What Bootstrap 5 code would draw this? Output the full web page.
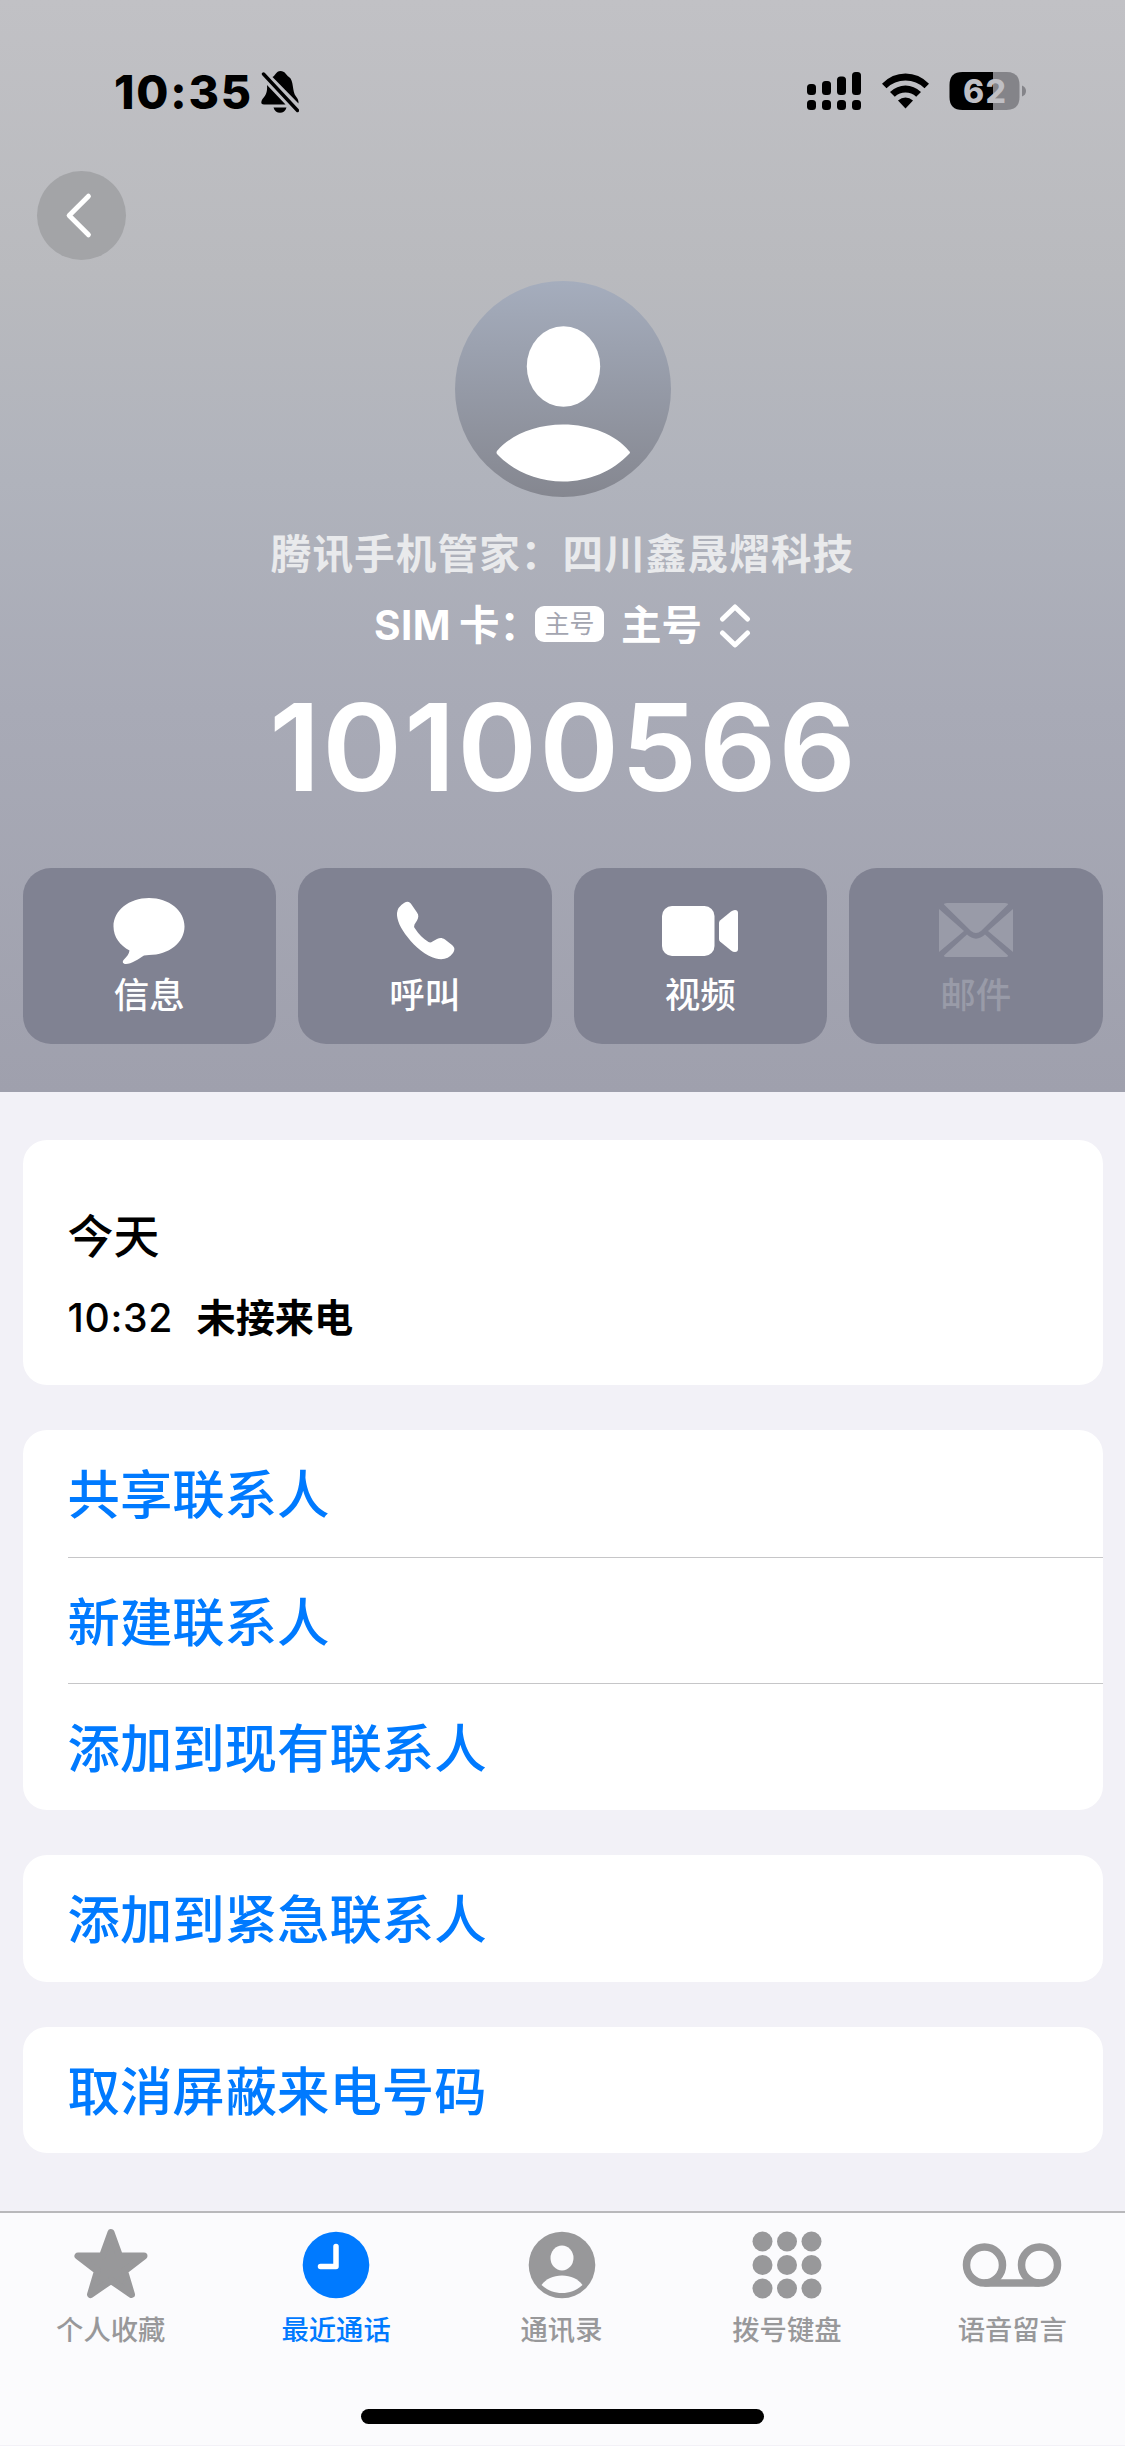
<!DOCTYPE html>
<html lang="zh-CN">
<head>
<meta charset="utf-8">
<meta name="viewport" content="width=device-width, initial-scale=1">
<title>10100566</title>
<link href="https://cdn.jsdelivr.net/npm/bootstrap@5.3.0/dist/css/bootstrap.min.css" rel="stylesheet">
<style>
body{width:1125px;height:2446px;overflow:hidden;background:#f2f1f7;font-family:Inter,"Noto Sans CJK SC",sans-serif;color:#000;line-height:1}
svg{display:block;flex:none}
.hero{height:1092px;background:linear-gradient(#c1c1c5 0,#b9babe 25%,#b0b3bc 44%,#a8aab6 65%,#9fa0ad 100%)}
.statusbar{height:171px;padding:71px 99px 0 114px}
.clock-text{font-size:46.5px;font-weight:800;line-height:42px;letter-spacing:1.8px;width:147px;white-space:nowrap}
.wifi{margin-left:21px}
.battery{margin-left:20px}
.back-btn{width:89px;height:89px;margin-left:36.5px;background:#a3a4a7}
.avatar-svg{margin-top:21px}
.caller{font-size:40.6px;letter-spacing:1.1px;font-weight:700;line-height:50px;color:#e9eaec;margin-top:33px;white-space:nowrap}
.simline{height:50px;margin-top:21px;font-size:40.5px;font-weight:700;line-height:50px}
.sim-latin{letter-spacing:.5px}
.sim-label{margin-left:8px;width:76px;white-space:nowrap}
.simtag{width:69px;height:36px;border-radius:9px;background:#fff;color:#a3a5b0;font-size:25px;line-height:36px;font-weight:400;margin-top:-4px}
.sim-gap{margin-left:17px}
.number{font-size:121px;font-weight:600;line-height:130px;margin-top:31px;white-space:nowrap;letter-spacing:2px;padding-left:2px}
.actions{gap:22px;padding:0 22.5px;margin-top:56px}
.action{flex:1 1 0;height:176px;border:0;border-radius:28px;background:#808292;color:#fff;padding:29px 0 0}
.action span{font-size:35.5px;font-weight:500;line-height:40px;margin-top:11px}
.action.dim{color:#999ba8}
.sheet{padding:48px 22.5px 0;gap:45px}
.panel{background:#fff;border:0;border-radius:24px;overflow:hidden}
.today{height:245px;padding:69px 45px 0}
.today-title{font-size:46px;font-weight:500;line-height:54px}
.today-row{font-size:39.2px;line-height:44px;margin-top:33px}
.today-time{width:129px;letter-spacing:.7px}
.linkrow{height:126.7px;margin-left:45px;padding:4px 0 0;border:0;background:none;color:#007aff;font-size:52.4px;font-weight:500;line-height:122px;text-align:left}
.linkrow+.linkrow{border-top:1.5px solid #c6c6c8}
.tabs{height:234px;background:#fbfbfd;border-top:2px solid #b8b8bb;margin-top:58px}
.tabs-row{width:1127px;margin-left:-2px;height:196px}
.tab{color:#98989a;padding-top:15px;font-size:27.3px;font-weight:500}
.tab svg{height:72px}
.tab span{line-height:32px;margin-top:15px}
.tab.on{color:#007aff}
.homebar{width:403px;height:15px;border-radius:8px;background:#000}
</style>
</head>
<body>
<header class="hero d-flex flex-column text-white">
  <div class="statusbar d-flex text-black">
    <div class="clock-text">10:35</div>
    <svg width="38" height="42" viewBox="0 0 38 42"><path d="M11.500 6C14 5 15 0 19.500 0C24 0 25 4 28 6C33 9 31 21 35 25.500C37 28 37.500 29 37.500 32.500ZM6 14L24.500 33.500H3C0 33.500 -.5 31 1.500 28C5 24 6.500 21 6 14ZM12.500 36.500H25.500C24 43.500 14 43.500 12.500 36.500Z"/><path d="M2.500 3L36.500 39.500" stroke="#000" stroke-width="3.400" stroke-linecap="round"/></svg>
    <svg class="ms-auto" width="54" height="40" viewBox="0 0 54 40"><rect y="13" width="9" height="11" rx="3.500"/><rect x="15" y="10" width="9" height="14" rx="3.500"/><rect x="30" y="5.500" width="9" height="18.500" rx="3.500"/><rect x="45" y="1" width="9" height="23" rx="3.500"/><rect y="29" width="9" height="10" rx="3.500"/><rect x="15" y="29" width="9" height="10" rx="3.500"/><rect x="30" y="29" width="9" height="10" rx="3.500"/><rect x="45" y="29" width="9" height="10" rx="3.500"/></svg>
    <svg class="wifi" width="47" height="40" viewBox="0 0 47 40"><path d="M0 12.700Q10 2.500 23.500 2.500T47 12.700L42.500 17.200Q34.500 9.500 23.500 9.500T4.500 17.200ZM8 21Q15 14.500 23.500 14.500T39 21L34.200 25.700Q29.500 21.500 23.500 21.500T12.800 25.700ZM16 29.500Q19.500 26.500 23.500 26.500T31 29.500L23.500 37.500Z"/></svg>
    <svg class="battery" width="77" height="40" viewBox="0 0 77 40"><path d="M44 1H57.500Q70.500 1 70.500 14V26Q70.500 39 57.500 39H44Z" fill="#848489"/><path d="M44 1H13.500Q.5 1 .5 14V26Q.5 39 13.500 39H44Z"/><path d="M73 14.500Q77 16 77 20T73 25.500Z" fill="#848489"/><text x="35.500" y="32" text-anchor="middle" font-size="32" font-weight="800" fill="#bfbfc4" font-family="Inter" textLength="43">62</text></svg>
  </div>
  <button class="back-btn btn rounded-circle border-0 p-0" aria-label="返回"><svg width="89" height="89" viewBox="0 0 90 90" fill="none" stroke="#fff" stroke-width="5" stroke-linecap="round" stroke-linejoin="round"><path d="M52 25.500L32.500 45L52 64.500"/></svg></button>
  <svg class="avatar-svg mx-auto" width="216" height="216" viewBox="0 0 216 216"><defs><linearGradient id="ag" x2="0" y2="1"><stop stop-color="#a5adbd"/><stop offset="1" stop-color="#858790"/></linearGradient></defs><circle cx="108" cy="108" r="108" fill="url(#ag)"/><ellipse cx="108.500" cy="85.500" rx="36.700" ry="40.200" fill="#fff"/><path d="M42 170C56 154 80 143.500 108 143.500S161 154 174 170Q176 171.500 174 173C158 190 134 200.500 108 200.500S58 190 42 173Q41 171.500 42 170Z" fill="#fff"/></svg>
  <div class="caller text-center">腾讯手机管家：四川鑫晟熠科技</div>
  <div class="simline d-flex align-items-center justify-content-center">
    <span class="sim-latin">SIM</span><span class="sim-label">卡：</span><span class="simtag text-center">主号</span><span class="sim-gap">主号</span>
    <svg class="sim-gap" width="32" height="46" viewBox="0 0 32 46" fill="none" stroke="#fff" stroke-width="5" stroke-linecap="round" stroke-linejoin="round"><path d="M3.500 16L16 4L28.500 16M3.500 30L16 42L28.500 30"/></svg>
  </div>
  <div class="number text-center">10100566</div>
  <div class="actions d-flex">
    <button class="action btn d-flex flex-column align-items-center"><svg width="72" height="68" viewBox="0 0 72 68" fill="currentColor"><path d="M36 1C56 1 71.500 13.500 71.500 29.500S56 58 36 58L31 58.500C26 62 18 67 13 67C9.500 67 9 64.500 11 62.500C14 59.500 16 57 16.500 53.500C7 48.500 .5 40 .5 29.500C.5 13.500 16 1 36 1Z"/></svg><span>信息</span></button>
    <button class="action btn d-flex flex-column align-items-center"><svg width="72" height="68" viewBox="0 0 72 68" fill="currentColor"><path d="M15 6C18.500 4 20.500 4.500 22.500 7.500L28 15.500C30 18.500 29.500 20.500 28 23.500L25.500 27.500Q24.500 29.500 26 31.500C30 37.500 34 41.500 39.500 45Q41.500 46 43.500 44.500L48 42C51 40.500 53 40.500 56 42.500L63 48C66 50.500 66 53 64 56C60 61.500 54 63.500 47 61.500C37 59 26 50 18.500 40C12 32 7.500 23 8 16Q8.500 10 15 6Z"/></svg><span>呼叫</span></button>
    <button class="action btn d-flex flex-column align-items-center"><svg width="76" height="68" viewBox="0 0 76 68" fill="currentColor"><rect y="9" width="52.500" height="50" rx="10"/><path d="M57 26Q57 24.500 58 23.500L69 14.500Q71 13 73 13Q76 13 76 16V52Q76 55 73 55Q71 55 69 53.500L58 44.500Q57 43.500 57 42Z"/></svg><span>视频</span></button>
    <button class="action dim btn d-flex flex-column align-items-center"><svg width="76" height="68" viewBox="0 0 76 68" fill="currentColor"><path d="M6 7.500Q6 6 9 6H67Q70 6 70 7.500L43 34Q38 38 33 34ZM1 12L26 34L1 55ZM75 12V55L50 34ZM29 37.500C35 43 41 43 47 37.500L70 58.500Q70 60 67 60H9Q6 60 6 58.500Z"/></svg><span>邮件</span></button>
  </div>
</header>
<main class="sheet d-flex flex-column">
  <section class="panel card today">
    <div class="today-title">今天</div>
    <div class="today-row d-flex"><span class="today-time fw-medium">10:32</span><b>未接来电</b></div>
  </section>
  <section class="panel card">
    <button class="linkrow">共享联系人</button>
    <button class="linkrow">新建联系人</button>
    <button class="linkrow">添加到现有联系人</button>
  </section>
  <section class="panel card"><button class="linkrow">添加到紧急联系人</button></section>
  <section class="panel card"><button class="linkrow">取消屏蔽来电号码</button></section>
</main>
<nav class="tabs">
  <div class="tabs-row row g-0">
    <div class="tab col d-flex flex-column align-items-center"><svg width="74" height="72" viewBox="0 0 74 72" fill="currentColor" stroke="currentColor" stroke-width="7" stroke-linejoin="round"><path d="M37 4.500L45.500 28H70L50.500 43L57.500 66.500L37 52.500L16.500 66.500L23.500 43L4 28H28.500Z"/></svg><span>个人收藏</span></div>
    <div class="tab on col d-flex flex-column align-items-center"><svg width="68" height="72" viewBox="0 0 68 72"><circle cx="34" cy="37" r="33.300" fill="currentColor"/><path d="M34 18.500V38.500H18.500" fill="none" stroke="#fff" stroke-width="5.500" stroke-linecap="round" stroke-linejoin="round"/></svg><span>最近通话</span></div>
    <div class="tab col d-flex flex-column align-items-center"><svg width="68" height="72" viewBox="0 0 68 72"><circle cx="34" cy="37" r="33.300" fill="currentColor"/><ellipse cx="34" cy="30" rx="11.500" ry="12.500" fill="#fbfbfd"/><path d="M13.500 57C18 51 25 47.500 34 47.500S50 51 54.500 57C49 62 42 65 34 65S19 62 13.500 57Z" fill="#fbfbfd"/></svg><span>通讯录</span></div>
    <div class="tab col d-flex flex-column align-items-center"><svg width="70" height="72" viewBox="0 0 70 72" fill="currentColor"><circle cx="10.500" cy="13.500" r="10"/><circle cx="35" cy="13.500" r="10"/><circle cx="59.500" cy="13.500" r="10"/><circle cx="10.500" cy="37" r="10"/><circle cx="35" cy="37" r="10"/><circle cx="59.500" cy="37" r="10"/><circle cx="10.500" cy="60.500" r="10"/><circle cx="35" cy="60.500" r="10"/><circle cx="59.500" cy="60.500" r="10"/></svg><span>拨号键盘</span></div>
    <div class="tab col d-flex flex-column align-items-center"><svg width="100" height="72" viewBox="0 0 100 72" fill="none" stroke="currentColor" stroke-width="7.500"><circle cx="22.500" cy="37" r="18"/><circle cx="77.500" cy="37" r="18"/><path d="M22.500 55H77.500"/></svg><span>语音留言</span></div>
  </div>
  <div class="homebar mx-auto"></div>
</nav>
<script src="https://cdn.jsdelivr.net/npm/bootstrap@5.3.0/dist/js/bootstrap.bundle.min.js"></script>
</body>
</html>
